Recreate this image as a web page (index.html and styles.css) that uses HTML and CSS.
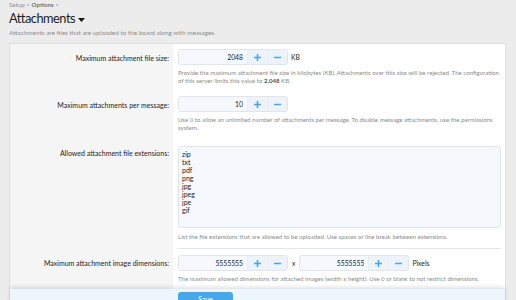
FILE: index.html
```html
<!DOCTYPE html>
<html lang="en">
<head>
  <meta charset="UTF-8">
  <title>Attachments</title>
  <link rel="stylesheet" href="styles.css">
</head>
<body>
  <div class="crumbs">Setup &gt; <b>Options</b> &gt;</div>
  <h1 class="title">Attachments <svg class="caret" width="7" height="4" viewBox="0 0 7 4"><path d="M0 0h7L3.5 4z" fill="#141414"/></svg></h1>
  <p class="intro">Attachments are files that are uploaded to the board along with messages.</p>

  <form class="block">
    <dl class="row">
      <dt>Maximum attachment file size:</dt>
      <dd>
        <div class="line">
          <div class="spin">
            <input type="text" value="2048">
            <button type="button" class="plus"></button>
            <button type="button" class="minus"></button>
          </div>
          <span class="unit">KB</span>
        </div>
        <div class="hint">Provide the maximum attachment file size in kilobytes (KB). Attachments over this size will be rejected. The configuration of this server limits this value to <b>2,048</b> KB.</div>
      </dd>
    </dl>

    <dl class="row">
      <dt>Maximum attachments per message:</dt>
      <dd>
        <div class="line">
          <div class="spin">
            <input type="text" value="10">
            <button type="button" class="plus"></button>
            <button type="button" class="minus"></button>
          </div>
        </div>
        <div class="hint">Use 0 to allow an unlimited number of attachments per message. To disable message attachments, use the permissions system.</div>
      </dd>
    </dl>

    <dl class="row area">
      <dt>Allowed attachment file extensions:</dt>
      <dd>
        <textarea class="exts">zip
txt
pdf
png
jpg
jpeg
jpe
gif</textarea>
        <div class="hint">List the file extensions that are allowed to be uploaded. Use spaces or line break between extensions.</div>
      </dd>
    </dl>

    <dl class="row sep">
      <dt>Maximum attachment image dimensions:</dt>
      <dd>
        <div class="line">
          <div class="spin">
            <input type="text" value="5555555">
            <button type="button" class="plus"></button>
            <button type="button" class="minus"></button>
          </div>
          <span class="times">x</span>
          <div class="spin">
            <input type="text" value="5555555">
            <button type="button" class="plus"></button>
            <button type="button" class="minus"></button>
          </div>
          <span class="unit">Pixels</span>
        </div>
        <div class="hint">The maximum allowed dimensions for attached images (width x height). Use 0 or blank to not restrict dimensions.</div>
      </dd>
    </dl>

    <div class="submit">
      <button type="submit" class="save">Save</button>
    </div>
  </form>
</body>
</html>
```

FILE: styles.css
```css
body { margin: 0; padding: 0 10px 0 9px; background: #ececec; font-family: "Segoe UI", Lato, "Liberation Sans", sans-serif; color: #1d1d1d; overflow: hidden; }
.crumbs { font-size: 6.2px; color: #8c8c8c; padding: 1px 0 0 0; line-height: 8px; }
.crumbs b { color: #707070; }
.title { margin: 0; font-size: 12.8px; letter-spacing: -0.5px; font-weight: normal; line-height: 19px; height: 19px; display: flex; align-items: center; gap: 3px; }
.caret { margin-top: 2px; }
.intro { margin: 0; font-size: 6.4px; color: #8c8c8c; line-height: 10px; height: 10px; }

.block { margin-top: 5px; background: #fff; border: 1px solid #dfdfdf; border-bottom: none; }
.row { display: flex; margin: 0; }
.row dt { width: 163px; flex: none; background: #f5f5f5; text-align: right; font-size: 7px; padding: 10px 4px 0 0; box-sizing: border-box; line-height: 8px; }
.row dd { flex: 1; margin: 0; padding: 5px 4px 6px 5px; }
.row.area dd { padding: 8px 4px 7px 5px; }
.row.area dt { padding-top: 11px; }
.row.area .hint { margin-top: 5px; }
.row.sep dd { border-top: 1px solid #e6e6e6; margin: 0 4px 0 4px; padding: 6px 0 6px 1px; }
.row.sep dt { padding-top: 11px; }

.line { display: flex; align-items: center; gap: 4px; }
.spin { display: flex; width: 110px; height: 16px; border: 1px solid #dfe6ee; border-radius: 3px; background: #f5f9fd; box-sizing: border-box; }
.spin input { flex: 1; min-width: 0; border: none; background: transparent; text-align: right; font: inherit; font-size: 6.8px; color: #1d1d1d; padding: 0 4px 0 0; outline: none; }
.spin button { width: 20px; border: none; border-left: 1px solid #e8eef5; background: #edf3f9 center no-repeat; padding: 0; }
.spin .plus { background-image: url("data:image/svg+xml,%3Csvg xmlns='http://www.w3.org/2000/svg' width='7' height='7'%3E%3Cpath d='M3.5 0v7M0 3.5h7' stroke='%2347a7eb' stroke-width='1.6'/%3E%3C/svg%3E"); }
.spin .minus { background-image: url("data:image/svg+xml,%3Csvg xmlns='http://www.w3.org/2000/svg' width='7' height='7'%3E%3Cpath d='M0 3.5h7' stroke='%2347a7eb' stroke-width='1.6'/%3E%3C/svg%3E"); border-radius: 0 3px 3px 0; }
.unit, .times { font-size: 6.8px; color: #1d1d1d; }
.unit { margin-left: -1px; }

.hint { font-size: 6.1px; color: #8c8c8c; line-height: 8px; margin-top: 4px; }
.hint b { color: #505050; }

.exts { display: block; width: 100%; height: 82px; box-sizing: border-box; resize: none; border: 1px solid #dfe6ee; border-radius: 3px; background: #f5f9fd; font: inherit; font-size: 7px; line-height: 8px; color: #1d1d1d; padding: 3px 3px; overflow: hidden; }

.submit { background: #edf6fd; height: 12px; box-shadow: 0 -2px 4px rgba(0,0,0,.12); position: relative; padding-left: 168px; padding-top: 3px; }
.save { width: 55px; height: 14px; border: none; border-radius: 3px; background: #47a7eb; color: #fff; font: inherit; font-size: 7px; vertical-align: top; }
```
